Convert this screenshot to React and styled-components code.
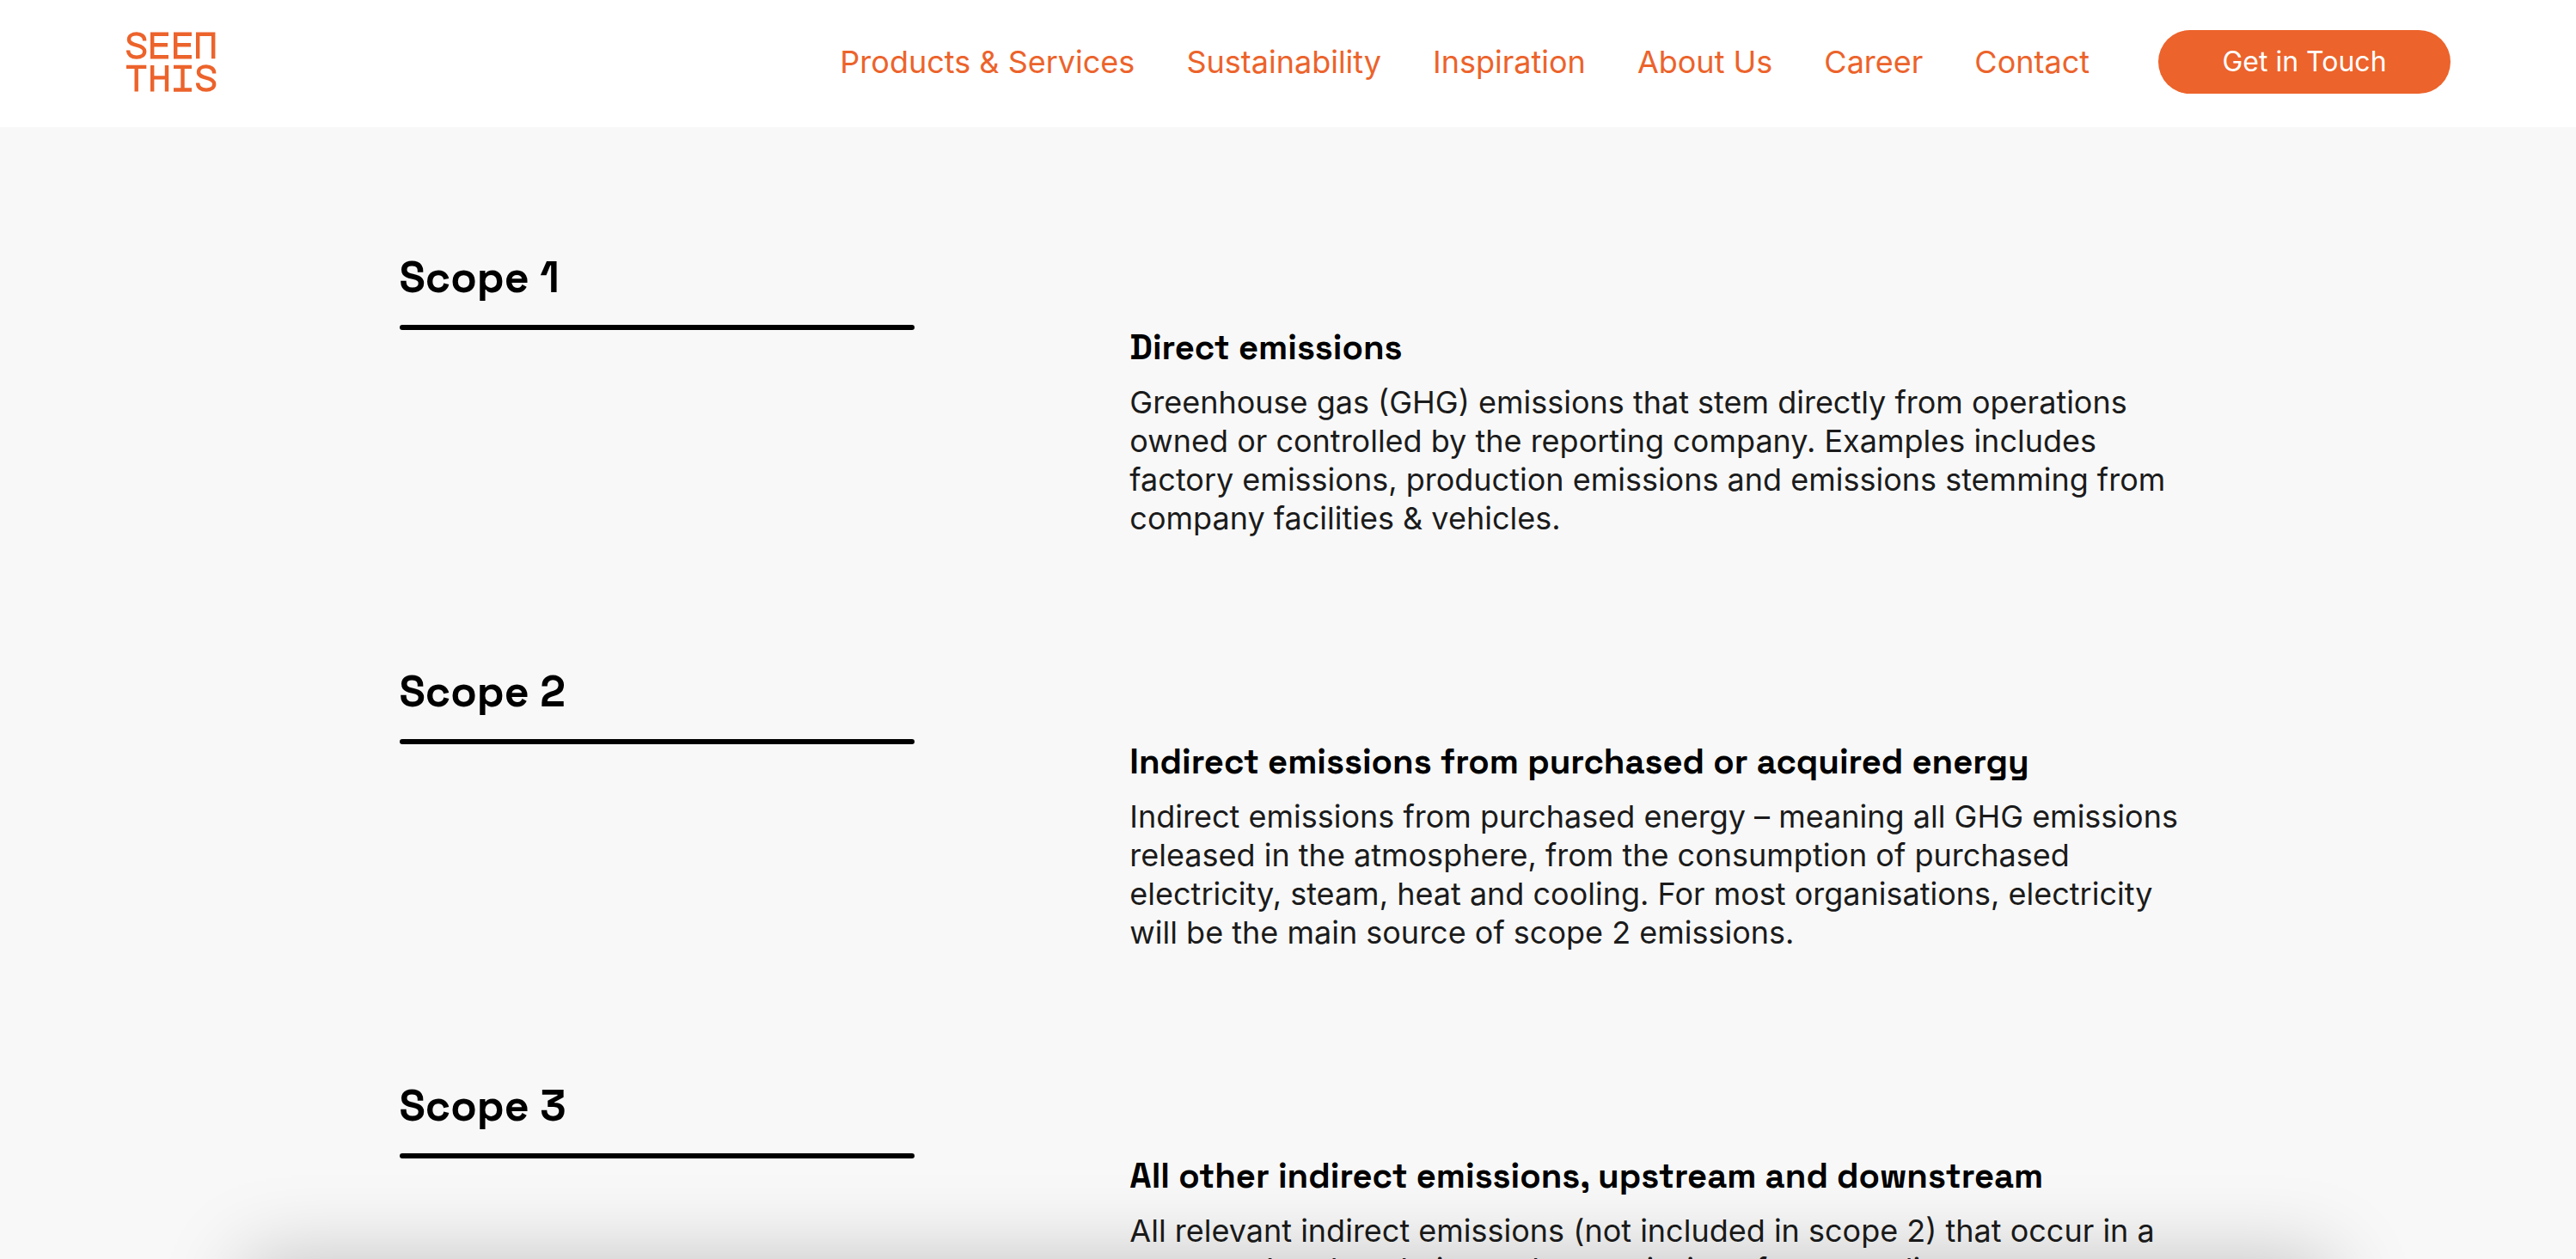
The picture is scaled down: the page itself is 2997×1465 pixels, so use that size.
import React from "react";
import styled, { createGlobalStyle } from "styled-components";

const orange = "#ec632b";

const GlobalStyle = createGlobalStyle`
  * { box-sizing: border-box; }
  body {
    margin: 0;
    background: #f8f8f8;
    color: #1b1b1b;
    font-family: Inter, "Liberation Sans", sans-serif;
    font-optical-sizing: none;
    -webkit-font-smoothing: antialiased;
  }
  h2, h3, p { margin: 0; }
`;

const Header = styled.header`
  display: flex;
  align-items: center;
  justify-content: space-between;
  padding: 35px 146px 39px 147px;
  background: #ffffff;
`;

const LogoLink = styled.a`
  display: block;
  line-height: 0;
  color: ${orange};
`;

const Menu = styled.div`
  display: flex;
  align-items: center;
  gap: 80px;
`;

const Nav = styled.nav`
  display: flex;
  gap: 60px;
`;

const NavLink = styled.a`
  color: ${orange};
  font-size: 36px;
  line-height: 44px;
  text-decoration: none;
  white-space: nowrap;
`;

const ContactButton = styled.button`
  min-width: 340px;
  height: 74px;
  border: 0;
  border-radius: 37px;
  background: ${orange};
  color: #ffffff;
  font: inherit;
  font-size: 32px;
  line-height: 40px;
  cursor: pointer;
`;

const Main = styled.main`
  display: flex;
  flex-direction: column;
  gap: 148px;
  padding: 144px 15% 144px 15.5%;
`;

const Section = styled.section`
  display: grid;
  grid-template-columns: 28.8% 1fr;
  column-gap: 12%;
  align-items: start;
`;

const ScopeTitle = styled.h2`
  display: flex;
  flex-direction: column;
  gap: 24px;
  color: #000000;
  font-family: "Space Grotesk", Inter, sans-serif;
  font-size: 50px;
  font-weight: 600;
  line-height: 62px;

  &::after {
    content: "";
    height: 6px;
    border-radius: 3px;
    background: #000000;
  }
`;

const Details = styled.div`
  display: flex;
  flex-direction: column;
  gap: 18px;
  padding-top: 90px;
`;

const DetailsTitle = styled.h3`
  color: #000000;
  font-family: "Space Grotesk", Inter, sans-serif;
  font-size: 40px;
  font-weight: 600;
  line-height: 46px;
`;

const DetailsText = styled.p`
  font-size: 36px;
  line-height: 45px;
`;

const BottomPanel = styled.div`
  position: fixed;
  top: 100%;
  left: 50%;
  width: 81%;
  height: 300px;
  transform: translateX(-50%);
  background: #ffffff;
  box-shadow: 0 0 90px rgba(0, 0, 0, 0.22);
  pointer-events: none;
`;

const links = [
  "Products & Services",
  "Sustainability",
  "Inspiration",
  "About Us",
  "Career",
  "Contact",
];

const scopes = [
  {
    name: "Scope 1",
    title: "Direct emissions",
    text: "Greenhouse gas (GHG) emissions that stem directly from operations owned or controlled by the reporting company. Examples includes factory emissions, production emissions and emissions stemming from company facilities & vehicles.",
  },
  {
    name: "Scope 2",
    title: "Indirect emissions from purchased or acquired energy",
    text: "Indirect emissions from purchased energy – meaning all GHG emissions released in the atmosphere, from the consumption of purchased electricity, steam, heat and cooling. For most organisations, electricity will be the main source of scope 2 emissions.",
  },
  {
    name: "Scope 3",
    title: "All other indirect emissions, upstream and downstream",
    text: "All relevant indirect emissions (not included in scope 2) that occur in a company’s value chain, such as emissions from suppliers.",
  },
];

const sCurve =
  "M21.2 10.4C21.2 5.4 17.4 2.4 12 2.4C6.6 2.4 3 5 3 8.8C3 13 6.6 14.3 12 15.6C17.6 17 21.2 18.6 21.2 22.8C21.2 27 17.4 29.6 12 29.6C6 29.6 2.1 26.6 2.1 21.4";

function Logo() {
  return (
    <svg width="105" height="70" viewBox="0 0 105 70" fill="none" stroke="currentColor" strokeWidth="4.4">
      <path d={sCurve} />
      <path d="M49 2.7H30.2V29.3H49M30.2 15.3H48" />
      <path d="M76 2.7H57.2V29.3H76M57.2 15.3H75" />
      <path d="M83.2 31.2V2.7H101.2V31.2" />
      <path d="M0 40.9H23.3M11.7 40.9V69.4" />
      <path d="M30.2 39V69.4M47 39V69.4M30.2 53.4H47" />
      <path d="M55 40.9H76M55 67.5H76M65.5 40.9V67.5" />
      <path d={sCurve} transform="translate(81 38)" />
    </svg>
  );
}

export default function App() {
  return (
    <>
      <GlobalStyle />
      <Header>
        <LogoLink href="#" aria-label="SeenThis">
          <Logo />
        </LogoLink>
        <Menu>
          <Nav>
            {links.map((label) => (
              <NavLink key={label} href="#">
                {label}
              </NavLink>
            ))}
          </Nav>
          <ContactButton type="button">Get in Touch</ContactButton>
        </Menu>
      </Header>
      <Main>
        {scopes.map(({ name, title, text }) => (
          <Section key={name}>
            <ScopeTitle>{name}</ScopeTitle>
            <Details>
              <DetailsTitle>{title}</DetailsTitle>
              <DetailsText>{text}</DetailsText>
            </Details>
          </Section>
        ))}
      </Main>
      <BottomPanel />
    </>
  );
}
